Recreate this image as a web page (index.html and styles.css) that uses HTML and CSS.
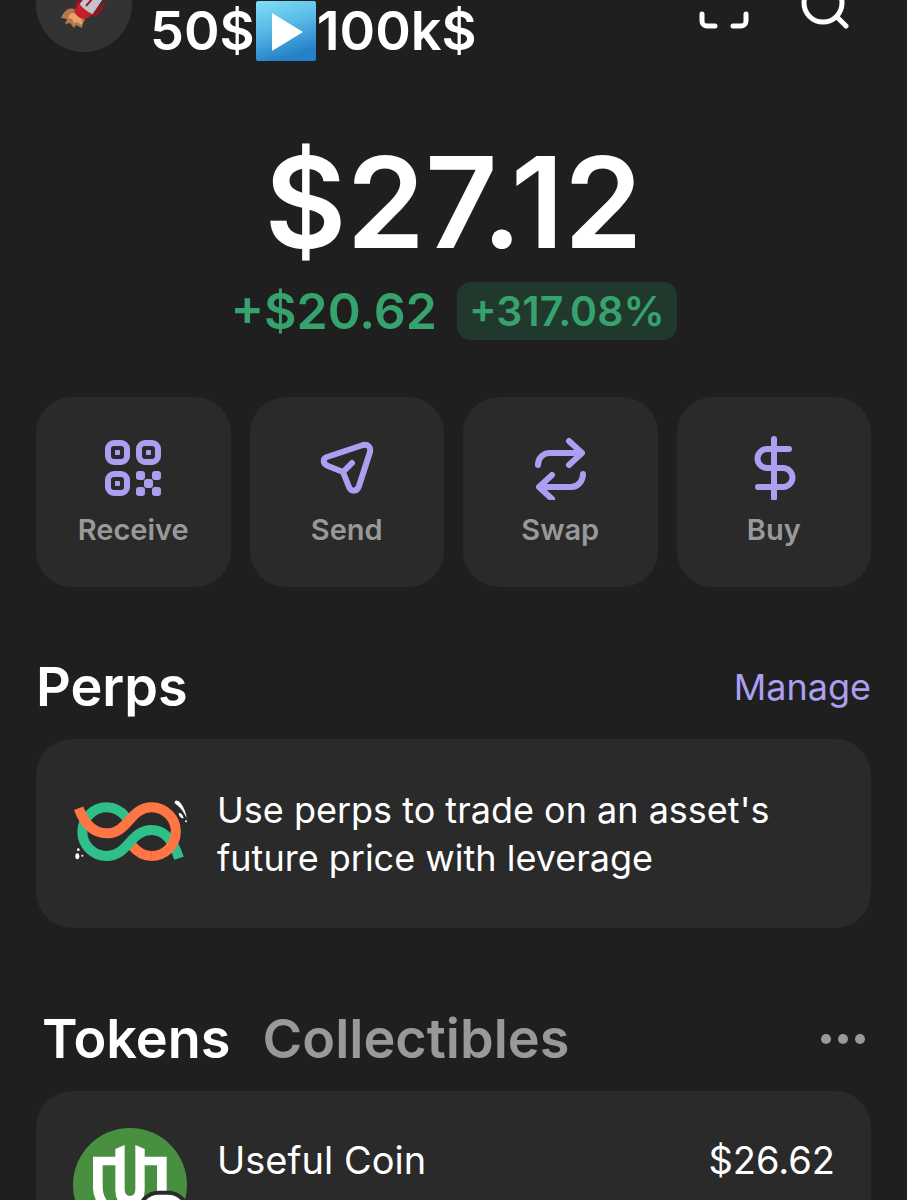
FILE: index.html
```html
<!DOCTYPE html>
<html lang="en">
<head>
    <meta charset="UTF-8">
    <meta name="viewport" content="width=device-width, initial-scale=1.0">
    <title>Wallet</title>
    <link rel="stylesheet" href="styles.css">
</head>
<body>
    <div class="screen">
        <header class="header">
            <button class="avatar" aria-label="Account">
                <svg viewBox="0 0 96 96">
                    <path d="M27 58c3-5 8-7 13-4l9 10c-2 3-3 5-3 8l-6-3-2 3-4-5-5 1 2-5-6-1z" fill="#b9784c"/>
                    <path d="M34 58c3-2 6-1 9 2s4 6 3 9l-5-3-3 1-2-4-4-1z" fill="#e3a56c"/>
                    <path d="M39 50c2-9 7-14 15-15l-6 17z" fill="#8f1620"/>
                    <path d="M58 61c6-4 10-9 11-16l-14 12z" fill="#8f1620"/>
                    <path d="M43 49L62 24c6-6 12-8 18-8 0 7-2 12-7 18L56 59z" fill="#c4c4ca"/>
                    <path d="M38 55l5-8c3 5 8 9 14 11l-7 5c-6 0-10-3-12-8z" fill="#c41f2b"/>
                    <path d="M50 50l13-15" stroke="#a3141f" stroke-width="2"/>
                </svg>
            </button>
            <div class="account-name">
                <span>50$</span>
                <svg class="play" viewBox="0 0 60 60" role="img" aria-label="Play">
                    <defs>
                        <linearGradient id="playBlue" x1="0" y1="0" x2="0.3" y2="1">
                            <stop offset="0" stop-color="#7fdff8"/>
                            <stop offset="0.5" stop-color="#58b9e6"/>
                            <stop offset="1" stop-color="#2581c8"/>
                        </linearGradient>
                    </defs>
                    <rect width="60" height="60" rx="2" fill="url(#playBlue)"/>
                    <path d="M16 12l31 19-31 19z" fill="#fff"/>
                </svg>
                <span>100k$</span>
            </div>
            <div class="header-icons">
                <button class="icon-button" aria-label="Scan">
                    <svg viewBox="0 0 50 50">
                        <path d="M3 17V10a7 7 0 0 1 7-7h7M33 3h7a7 7 0 0 1 7 7v7M47 35v7a5 5 0 0 1-5 5h-8M16 47H8a5 5 0 0 1-5-5v-7"/>
                    </svg>
                </button>
                <button class="icon-button" aria-label="Search">
                    <svg viewBox="0 0 50 50">
                        <circle cx="24" cy="24" r="19"/>
                        <path d="M38 38l9 9"/>
                    </svg>
                </button>
            </div>
        </header>

        <section class="balance">
            <h1 class="total">$27.12</h1>
            <div class="change">
                <span class="change-amount">+$20.62</span>
                <span class="change-percent">+317.08%</span>
            </div>
        </section>

        <nav class="actions">
            <button class="action">
                <svg viewBox="0 0 64 64">
                    <rect x="7" y="7" width="19" height="19" rx="6"/>
                    <rect x="38" y="7" width="19" height="19" rx="6"/>
                    <rect x="7" y="38" width="19" height="19" rx="6"/>
                    <g class="solid">
                        <rect x="14" y="14" width="5" height="5" rx="1"/>
                        <rect x="45" y="14" width="5" height="5" rx="1"/>
                        <rect x="14" y="45" width="5" height="5" rx="1"/>
                        <rect x="35" y="35" width="9" height="9" rx="3"/>
                        <rect x="51" y="35" width="9" height="9" rx="3"/>
                        <rect x="43" y="43" width="9" height="9" rx="3"/>
                        <rect x="35" y="51" width="9" height="9" rx="3"/>
                        <rect x="51" y="51" width="9" height="9" rx="3"/>
                    </g>
                </svg>
                Receive
            </button>
            <button class="action">
                <svg viewBox="0 0 64 64">
                    <path d="M12 21L48 9c5-1 8 2 7 7L44 50c-2 6-8 6-10 1l-6-15-15-6c-5-2-6-7-1-9zM28 36l9-9"/>
                </svg>
                Send
            </button>
            <button class="action">
                <svg viewBox="0 0 64 64">
                    <path d="M10 29c0-7 5-12 12-12h31M41 5l13 12-13 12M55 38c0 7-5 13-12 13H12M24 39L11 51l13 12"/>
                </svg>
                Swap
            </button>
            <button class="action">
                <svg viewBox="0 0 64 64">
                    <path d="M32 3v59M47 13H25a9 9 0 0 0 0 19h16a9 9 0 0 1 0 19H16"/>
                </svg>
                Buy
            </button>
        </nav>

        <section class="perps">
            <div class="section-head">
                <h2>Perps</h2>
                <a class="manage" href="#">Manage</a>
            </div>
            <div class="card">
                <svg class="perps-art" viewBox="129 209 342 204">
                    <g fill="none" stroke-width="30">
                        <path d="M365 377C342 377 322 366 306 346" stroke="#ff7543"/>
                        <path d="M292 264C274 242 252 231 230 231A73 73 0 0 0 230 377C295 377 300 299 365 299C405 299 430 330 447 384" stroke="#2fc08a"/>
                        <path d="M146 234C165 285 195 309 230 309C295 309 300 231 365 231A73 73 0 0 1 364 377" stroke="#ff7543"/>
                    </g>
                    <g fill="#fff">
                        <path d="M434 214c4-6 12-4 18 5 10 13 16 28 18 44-9-19-19-33-34-43-2-2-3-4-2-6z"/>
                        <path d="M446 248c7-2 13 5 15 16-8 1-14-7-15-16z"/>
                        <circle cx="468" cy="273" r="3"/>
                        <ellipse cx="142" cy="378" rx="6" ry="9"/>
                        <circle cx="145" cy="358" r="4"/>
                        <circle cx="157" cy="376" r="3"/>
                    </g>
                </svg>
                <p class="perps-text">Use perps to trade on an asset's<br>future price with leverage</p>
            </div>
        </section>

        <section class="tokens">
            <div class="section-head tabs-head">
                <div class="tabs" role="tablist">
                    <button class="tab active" role="tab" aria-selected="true">Tokens</button>
                    <button class="tab" role="tab" aria-selected="false">Collectibles</button>
                </div>
                <button class="more" aria-label="More">
                    <svg viewBox="0 0 44 12">
                        <circle cx="5" cy="6" r="5"/>
                        <circle cx="22" cy="6" r="5"/>
                        <circle cx="39" cy="6" r="5"/>
                    </svg>
                </button>
            </div>
            <div class="card token">
                <svg class="token-logo" viewBox="130 144 342 342">
                    <circle cx="301" cy="315" r="171" fill="#489040"/>
                    <path d="M190 230H257V207L285 195V328Q285 348 301 348Q317 348 317 328V195L345 207V230H411V400H382V256H345V330Q345 378 301 378Q257 378 257 330V256H219V322Q219 350 240 372L222 392Q190 360 190 325Z" fill="#fff"/>
                    <rect x="330" y="338" width="142" height="142" rx="56" fill="#fff" stroke="#2a2a2a" stroke-width="12"/>
                </svg>
                <div class="token-name">Useful Coin</div>
                <div class="token-value">
                    <span>$26.62</span>
                    <span class="token-change">+$20.62</span>
                </div>
            </div>
        </section>
    </div>
</body>
</html>
```
FILE: styles.css
```css
* {
    box-sizing: border-box;
}
body {
    margin: 0;
    background: #1f1f1f;
    font-family: Inter, sans-serif;
    color: #fff;
}
button {
    border: none;
    padding: 0;
    background: none;
    color: inherit;
    font: inherit;
    cursor: pointer;
}
svg {
    display: block;
}
h1, h2, p {
    margin: 0;
}
.screen {
    height: 100vh;
    overflow: hidden;
    padding: 0 36px;
}

/* header is scrolled partly out of view */
.header {
    display: flex;
    margin-top: -44px;
    height: 105px;
}
.avatar {
    width: 96px;
    height: 96px;
    border-radius: 50%;
    background: #333;
    overflow: hidden;
}
.account-name {
    display: flex;
    align-items: center;
    align-self: flex-end;
    gap: 1px;
    margin-left: 18px;
    font-size: 54px;
    font-weight: 600;
    line-height: 60px;
}
.play {
    width: 60px;
    height: 60px;
}
.header-icons {
    display: flex;
    align-items: center;
    gap: 50px;
    height: 96px;
    margin-left: auto;
    margin-right: 22px;
}
.icon-button svg {
    width: 50px;
    height: 50px;
    fill: none;
    stroke: #fff;
    stroke-width: 5;
    stroke-linecap: round;
}

.balance {
    margin-top: 77px;
    text-align: center;
}
.total {
    font-size: 126px;
    font-weight: 600;
    line-height: 128px;
}
.change {
    display: flex;
    justify-content: center;
    align-items: center;
    gap: 20px;
    margin-top: 15px;
    color: #36a36e;
    font-weight: 600;
}
.change-amount {
    font-size: 50px;
    line-height: 60px;
}
.change-percent {
    padding: 0 12px;
    border-radius: 14px;
    background: #21382d;
    font-size: 41px;
    line-height: 58px;
}

.actions {
    display: grid;
    grid-template-columns: repeat(4, 1fr);
    gap: 19px;
    margin-top: 56px;
}
.action {
    display: flex;
    flex-direction: column;
    align-items: center;
    gap: 12px;
    padding: 39px 0;
    border-radius: 36px;
    background: #2a2a2a;
    color: #999;
    font-size: 29px;
    font-weight: 600;
    line-height: 36px;
}
.action svg {
    width: 64px;
    height: 64px;
    fill: none;
    stroke: #ab9ff2;
    stroke-width: 6;
    stroke-linecap: round;
    stroke-linejoin: round;
}
.action .solid {
    fill: #ab9ff2;
    stroke: none;
}

.perps {
    margin-top: 68px;
}
.section-head {
    display: flex;
    justify-content: space-between;
    align-items: center;
    margin-bottom: 20px;
    font-size: 54px;
    line-height: 64px;
}
h2 {
    font-size: 54px;
    font-weight: 600;
}
.manage {
    color: #ab9ff2;
    font-size: 36px;
    text-decoration: none;
}
.card {
    display: flex;
    align-items: center;
    gap: 30px;
    padding: 47px 36px 46px 37px;
    border-radius: 36px;
    background: #2a2a2a;
    font-size: 36px;
    line-height: 48px;
}
.perps-art {
    width: 114px;
    height: 68px;
}

.tokens {
    margin-top: 79px;
}
.tabs-head {
    padding: 0 6px;
}
.tabs {
    display: flex;
    gap: 32px;
}
.tab {
    color: #999;
    font-weight: 600;
}
.tab.active {
    color: #fff;
}
.more svg {
    width: 44px;
    height: 12px;
    fill: #999;
}
.token {
    align-items: flex-start;
    padding: 37px 36px 37px 37px;
    font-size: 38px;
}
.token-logo {
    width: 114px;
    height: 114px;
}
.token-name {
    padding-top: 8px;
}
.token-value {
    display: flex;
    flex-direction: column;
    gap: 6px;
    margin-left: auto;
    padding-top: 8px;
    text-align: right;
}
.token-change {
    color: #36a36e;
    font-size: 30px;
}
```
